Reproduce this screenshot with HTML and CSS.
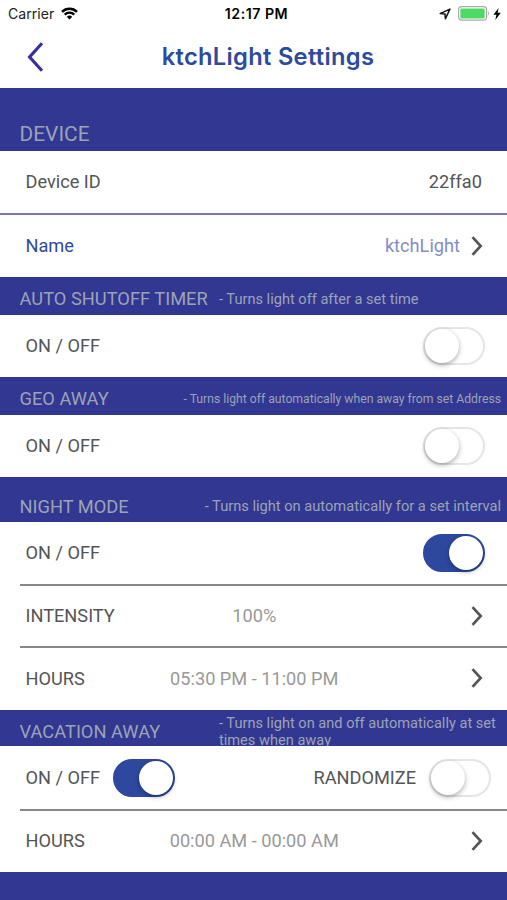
FILE: index.html
```
<!DOCTYPE html>
<html lang="en">
<head>
    <meta charset="utf-8">
    <title>ktchLight Settings</title>
    <link rel="stylesheet" href="styles.css">
</head>
<body>
    <svg width="0" height="0" class="symbols">
        <symbol id="chevron" viewBox="0 0 12 20">
            <path d="M1.5 1.2 L9.7 10 L1.5 18.8" fill="none" stroke="currentColor" stroke-width="2.7"/>
        </symbol>
    </svg>

    <div class="status-bar">
        <div class="carrier">
            <span>Carrier</span>
            <svg width="17" height="13" viewBox="0 0 17 13" fill="none" stroke="#000">
                <path d="M1 4.8 A10.8 10.8 0 0 1 16 4.8" stroke-width="2.4"/>
                <path d="M3.7 7.6 A6.9 6.9 0 0 1 13.3 7.6" stroke-width="2.2"/>
                <path d="M8.5 12.4 L5.8 9.7 A3.9 3.9 0 0 1 11.2 9.7 Z" fill="#000" stroke="none"/>
            </svg>
        </div>
        <span class="time">12:17 PM</span>
        <div class="indicators">
            <svg width="12" height="12" viewBox="0 0 12 12">
                <path d="M1.2 5.6 L10.9 1.1 L6.4 10.8 L6 6 Z" fill="none" stroke="#111" stroke-width="1.5" stroke-linejoin="round"/>
            </svg>
            <svg width="32" height="15" viewBox="0 0 32 15">
                <rect x="0.6" y="0.6" width="28" height="13.6" rx="3.2" fill="#fff" stroke="#aaa" stroke-width="1.2"/>
                <rect x="2.4" y="2.4" width="24.2" height="10" rx="1.2" fill="#4cd964"/>
                <path d="M30 5 Q32 7.4 30 9.8 Z" fill="#aaa"/>
            </svg>
            <svg width="8" height="12" viewBox="0 0 8 12">
                <path d="M5.6 0 L0.4 6.8 H3.4 L2.3 12 L7.8 4.8 H4.6 Z" fill="#000"/>
            </svg>
        </div>
    </div>

    <div class="nav">
        <svg class="back" width="18" height="32" viewBox="0 0 18 32">
            <path d="M15 2.2 L2.6 16 L15 29.8" fill="none" stroke="#37309b" stroke-width="3.2"/>
        </svg>
        <h1>ktchLight Settings</h1>
    </div>

    <div class="section device">
        <h2>DEVICE</h2>
    </div>
    <div class="row plain">
        <span class="label">Device ID</span>
        <span class="device-id">22ffa0</span>
    </div>
    <div class="row plain name">
        <span class="label">Name</span>
        <span class="value">ktchLight</span>
        <svg class="chevron"><use href="#chevron"/></svg>
    </div>

    <div class="section">
        <h2>AUTO SHUTOFF TIMER</h2>
        <p class="timer-hint">- Turns light off after a set time</p>
    </div>
    <div class="row plain">
        <span class="label">ON / OFF</span>
        <span class="switch"></span>
    </div>

    <div class="section">
        <h2>GEO AWAY</h2>
        <p class="geo-hint">- Turns light off automatically when away from set Address</p>
    </div>
    <div class="row plain">
        <span class="label">ON / OFF</span>
        <span class="switch"></span>
    </div>

    <div class="section night">
        <h2>NIGHT MODE</h2>
        <p class="night-hint">- Turns light on automatically for a set interval</p>
    </div>
    <div class="row plain">
        <span class="label">ON / OFF</span>
        <span class="switch on"></span>
    </div>
    <div class="row detail intensity">
        <span class="label">INTENSITY</span>
        <span class="value">100%</span>
        <svg class="chevron"><use href="#chevron"/></svg>
    </div>
    <div class="row detail night-hours">
        <span class="label">HOURS</span>
        <span class="value">05:30 PM - 11:00 PM</span>
        <svg class="chevron"><use href="#chevron"/></svg>
    </div>

    <div class="section vacation">
        <h2>VACATION AWAY</h2>
        <p class="vacation-hint">- Turns light on and off automatically at set times when away</p>
    </div>
    <div class="row double">
        <span class="label">ON / OFF</span>
        <span class="switch on"></span>
        <span class="label randomize">RANDOMIZE</span>
        <span class="switch"></span>
    </div>
    <div class="row detail">
        <span class="label">HOURS</span>
        <span class="value">00:00 AM - 00:00 AM</span>
        <svg class="chevron"><use href="#chevron"/></svg>
    </div>
</body>
</html>
```
FILE: styles.css
```
* {
    box-sizing: border-box;
}
body {
    margin: 0;
    height: 900px;
    overflow: hidden;
    background: #323791;
    font-family: Roboto, sans-serif;
    font-size: 18.2px;
    color: #555;
}
h1, h2, p {
    margin: 0;
    font-weight: normal;
    white-space: nowrap;
}
.symbols {
    display: block;
}

/* Top bar */
.status-bar {
    display: grid;
    grid-template-columns: 1fr auto 1fr;
    align-items: center;
    height: 27px;
    padding: 0 6px 0 8px;
    background: #fff;
    font-family: Inter, sans-serif;
    font-size: 14.1px;
    color: #222;
}
.carrier {
    display: flex;
    align-items: center;
    gap: 7px;
}
.time {
    font-size: 14.2px;
    font-weight: 600;
    letter-spacing: 0.5px;
    color: #000;
    margin-left: 4px;
}
.indicators {
    display: flex;
    align-items: center;
    justify-content: flex-end;
}
.indicators svg:first-child {
    margin-right: 7px;
}
.indicators svg:last-child {
    margin-left: 3px;
}
.nav {
    display: grid;
    grid-template-columns: 1fr auto 1fr;
    align-items: center;
    height: 61px;
    padding: 0 0 2px 27px;
    background: #fff;
}
.nav h1 {
    font-family: Inter, sans-serif;
    font-size: 23.7px;
    font-weight: 600;
    letter-spacing: 0.3px;
    margin-left: 2px;
    color: #2c4a9e;
}

/* Blue section headings */
.section {
    display: flex;
    align-items: center;
    justify-content: space-between;
    height: 38px;
    padding: 5px 6px 0 19.5px;
    color: #9ca3b6;
}
.section h2 {
    font-size: 18.3px;
}
.section.device {
    height: 63px;
    padding-top: 28px;
}
.section.device h2 {
    font-size: 20.9px;
}
.section.night {
    height: 45px;
    padding-top: 13px;
}
.section.vacation {
    height: 36px;
    padding-top: 7px;
    overflow: hidden;
}
.timer-hint {
    width: 282px;
    font-size: 14.6px;
}
.geo-hint {
    font-size: 12.2px;
}
.night-hint {
    font-size: 14.65px;
}
.vacation-hint {
    width: 282px;
    font-size: 14.6px;
    line-height: 17px;
    white-space: normal;
}

/* White rows */
.row {
    display: flex;
    align-items: center;
    justify-content: space-between;
    height: 62px;
    padding: 0 22px 0 25.5px;
    background: #fff;
}
.plain .label, .plain .value, .device-id {
    padding-bottom: 2px;
}
.device-id {
    margin-right: 3px;
}
.name {
    height: 64px;
    border-top: 2px solid #7477b8;
}
.name .label {
    color: #3049a0;
}
.name .value {
    margin-left: auto;
    margin-right: 11px;
    color: #858dc7;
}
.chevron {
    width: 12px;
    height: 20px;
    justify-self: end;
    margin-right: 2px;
}
.detail {
    display: grid;
    grid-template-columns: 1fr auto 1fr;
    height: 63px;
    padding-right: 24px;
    background: linear-gradient(#888, #888) 20px 0 / 100% 2px no-repeat #fff;
}
.intensity {
    height: 62px;
    padding-top: 1px;
}
.night-hours {
    height: 64px;
}
.detail .value {
    color: #999;
}
.detail .chevron {
    margin-right: 0;
}
.double {
    height: 63px;
    padding-right: 16px;
}
.double .randomize {
    margin-left: auto;
    margin-right: 13px;
}
.double .on {
    margin-left: 13px;
}

.switch {
    width: 62px;
    height: 38px;
    border: 2px solid #e5e5e5;
    border-radius: 19px;
    background: #fff;
}
.switch::before {
    content: "";
    display: block;
    width: 34px;
    height: 34px;
    border-radius: 50%;
    background: #fff;
    box-shadow: 0 2px 5px rgba(0, 0, 0, 0.32);
}
.switch.on {
    border-color: #2d489e;
    background: #2d489e;
}
.switch.on::before {
    margin-left: 24px;
}
```
